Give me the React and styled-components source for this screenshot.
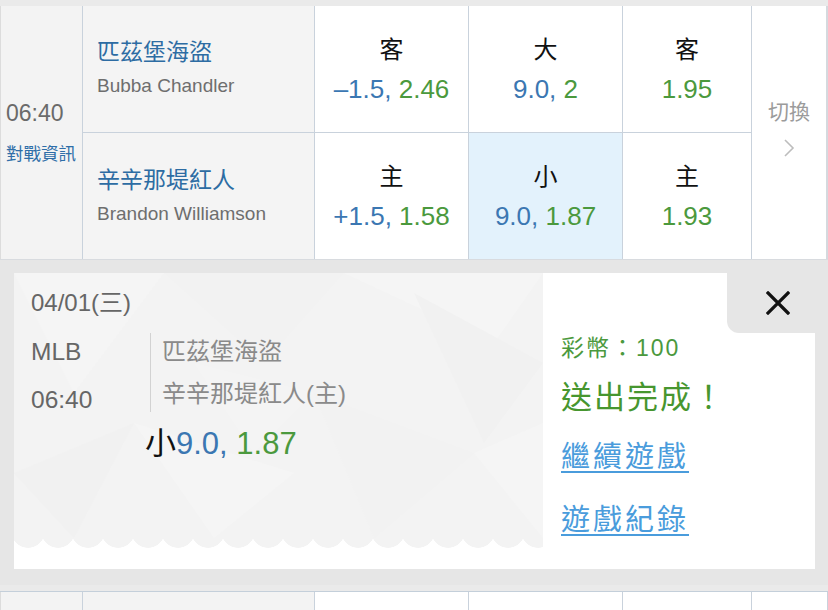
import React from "react";
import styled, { createGlobalStyle } from "styled-components";

const GlobalStyle = createGlobalStyle`
  html, body {
    margin: 0;
    padding: 0;
    background: #fff;
  }
  body {
    width: 828px;
    overflow: hidden;
    font-family: "Liberation Sans", "Noto Sans CJK TC", sans-serif;
  }
  * {
    box-sizing: border-box;
  }
`;

const COLS = "83px 232px 154px 154px 129px 76px";
const LINE = "#c9d2dc";
const BLUE = "#3b77b2";
const GREEN = "#4b993d";

const Strip = styled.div`
  height: 6px;
  background: #eaeaea;
`;

const MatchGrid = styled.div`
  display: grid;
  grid-template-columns: ${COLS};
  grid-template-rows: 127px 126px;
  border-bottom: 1px solid #d8dbdf;
`;

const TimeCell = styled.div`
  grid-column: 1;
  grid-row: 1 / span 2;
  display: flex;
  flex-direction: column;
  justify-content: center;
  gap: 14px;
  padding: 0 0 2px 5px;
  background: #f3f3f3;
  border-left: 1px solid #dcdcdc;
  border-right: 1px solid ${LINE};
`;

const TimeText = styled.div`
  font-size: 23px;
  line-height: 30px;
  color: #6a6a6a;
`;

const InfoLink = styled.div`
  font-size: 17.5px;
  line-height: 24px;
  color: #2f6ea8;
`;

const TeamCell = styled.div`
  grid-column: 2;
  padding: ${(p) => (p.$top ? "31px" : "32px")} 0 0 14px;
  background: #f4f4f4;
  border-right: 1px solid ${LINE};
  border-bottom: ${(p) => (p.$top ? `1px solid ${LINE}` : "none")};
`;

const TeamName = styled.div`
  font-size: 23px;
  line-height: 30px;
  color: #2d6ca3;
`;

const Pitcher = styled.div`
  margin-top: 7px;
  font-size: 19px;
  line-height: 24px;
  color: #6e6e6e;
  white-space: nowrap;
`;

const OddsCell = styled.div`
  padding-top: 28px;
  text-align: center;
  background: ${(p) => (p.$active ? "#e3f2fc" : "#fff")};
  border-right: 1px solid ${LINE};
  border-bottom: ${(p) => (p.$top ? `1px solid ${LINE}` : "none")};
`;

const OddsLabel = styled.div`
  font-size: 24px;
  line-height: 32px;
  color: #111;
`;

const OddsValue = styled.div`
  margin-top: 7px;
  font-size: 26px;
  line-height: 32px;
`;

const Num = styled.span`
  color: ${(p) => (p.$green ? GREEN : BLUE)};
`;

const SwitchCell = styled.div`
  grid-column: 6;
  grid-row: 1 / span 2;
  display: flex;
  flex-direction: column;
  align-items: center;
  justify-content: center;
  gap: 12px;
  padding-bottom: 10px;
  background: #fff;
  border-right: 2px solid #d5d9de;
  color: #9b9b9b;
  font-size: 21px;
  line-height: 28px;
`;

const Overlay = styled.div`
  padding: 13px 13px 16px 14px;
  background: #e6e6e6;
`;

const Card = styled.div`
  display: flex;
  height: 296px;
  background: #fff;
`;

const Ticket = styled.div`
  width: 529px;
  display: flex;
  flex-direction: column;
`;

const TicketBody = styled.div`
  position: relative;
  height: 265px;
  padding: 16px 0 0 17px;
  background: #f3f3f3;
  overflow: hidden;
`;

const Pattern = styled.svg`
  position: absolute;
  inset: 0;
  z-index: 0;
`;

const TicketContent = styled.div`
  position: relative;
  z-index: 1;
`;

const Zigzag = styled.div`
  height: 10px;
  background: radial-gradient(circle 17px at 15px -7px, #f3f3f3 16.5px, transparent 17px) -1px 0 / 30px 10px repeat-x;
`;

const DateText = styled.div`
  font-size: 24px;
  line-height: 28px;
  color: #666;
`;

const InfoRow = styled.div`
  display: flex;
  align-items: flex-start;
  margin-top: 16px;
`;

const MetaCol = styled.div`
  width: 119px;
  display: flex;
  flex-direction: column;
  gap: 20px;
  padding-top: 5px;
  font-size: 24.5px;
  line-height: 28px;
  color: #666;
`;

const TeamsCol = styled.div`
  display: flex;
  flex-direction: column;
  gap: 14px;
  padding: 5px 0 4px 11px;
  border-left: 1px solid #d2d2d2;
  font-size: 24px;
  line-height: 28px;
  color: #8a8a8a;
`;

const PickLine = styled.div`
  margin-top: 12px;
  padding-left: 114px;
  font-size: 31px;
  line-height: 36px;
  color: #111;
`;

const ResultPanel = styled.div`
  flex: 1;
  display: flex;
  flex-direction: column;
  padding-left: 18px;
`;

const CloseTab = styled.div`
  align-self: flex-end;
  width: 88px;
  height: 60px;
  display: flex;
  align-items: center;
  justify-content: center;
  padding-left: 14px;
  background: #e6e6e6;
  border-bottom-left-radius: 12px;
`;

const Coins = styled.div`
  font-size: 23px;
  line-height: 30px;
  letter-spacing: 2px;
  color: ${GREEN};
`;

const Done = styled.div`
  margin-top: 15px;
  font-size: 31px;
  line-height: 40px;
  letter-spacing: 2px;
  color: #47962f;
`;

const ActionLink = styled.a`
  display: block;
  align-self: flex-start;
  margin-top: ${(p) => p.$gap}px;
  font-size: 29px;
  line-height: 36px;
  letter-spacing: 3px;
  color: #4a9cdc;
  text-decoration: underline;
  text-underline-offset: 4px;
  text-decoration-thickness: 1.5px;
  cursor: pointer;
`;

const NextGrid = styled.div`
  display: grid;
  grid-template-columns: ${COLS};
  height: 30px;
  border-top: 1px solid #c4cfda;
`;

const NextCell = styled.div`
  background: ${(p) => (p.$gray ? "#f3f3f3" : "#fff")};
  border-right: 1px solid ${LINE};
  border-left: ${(p) => (p.$first ? "1px solid #dcdcdc" : "none")};
`;

const Chevron = () => (
  <svg width="12" height="20" viewBox="0 0 12 20">
    <path d="M2 2 L10 10 L2 18" fill="none" stroke="#bdbdbd" strokeWidth="1.6" />
  </svg>
);

const CloseIcon = () => (
  <svg width="24" height="24" viewBox="0 0 24 24">
    <path d="M2 2 L22 22 M22 2 L2 22" stroke="#111" strokeWidth="3.2" strokeLinecap="square" />
  </svg>
);

const LowPoly = () => (
  <Pattern width="529" height="265" viewBox="0 0 529 265">
    <polygon points="0,0 150,0 60,120" fill="#f5f5f5" />
    <polygon points="150,0 330,0 250,90" fill="#f2f2f2" />
    <polygon points="330,0 529,0 480,70" fill="#f5f5f5" />
    <polygon points="400,20 529,90 470,170" fill="#f1f1f1" />
    <polygon points="0,200 120,150 60,265" fill="#f1f1f1" />
    <polygon points="120,150 280,200 200,265" fill="#f5f5f5" />
    <polygon points="300,120 460,180 360,265" fill="#f2f2f2" />
    <polygon points="460,180 529,150 529,265" fill="#f5f5f5" />
    <polygon points="180,90 300,120 240,180" fill="#f4f4f4" />
  </Pattern>
);

const rows = [
  {
    team: "匹茲堡海盜",
    pitcher: "Bubba Chandler",
    cells: [
      { label: "客", line: "–1.5", odd: "2.46" },
      { label: "大", line: "9.0", odd: "2" },
      { label: "客", odd: "1.95" },
    ],
  },
  {
    team: "辛辛那堤紅人",
    pitcher: "Brandon Williamson",
    cells: [
      { label: "主", line: "+1.5", odd: "1.58" },
      { label: "小", line: "9.0", odd: "1.87", active: true },
      { label: "主", odd: "1.93" },
    ],
  },
];

export default function App() {
  return (
    <>
      <GlobalStyle />
      <Strip />
      <MatchGrid>
        <TimeCell>
          <TimeText>06:40</TimeText>
          <InfoLink>對戰資訊</InfoLink>
        </TimeCell>
        {rows.map((row, i) => (
          <React.Fragment key={row.team}>
            <TeamCell $top={i === 0}>
              <TeamName>{row.team}</TeamName>
              <Pitcher>{row.pitcher}</Pitcher>
            </TeamCell>
            {row.cells.map((c, j) => (
              <OddsCell key={j} $top={i === 0} $active={c.active}>
                <OddsLabel>{c.label}</OddsLabel>
                <OddsValue>
                  {c.line && <Num>{c.line}, </Num>}
                  <Num $green>{c.odd}</Num>
                </OddsValue>
              </OddsCell>
            ))}
          </React.Fragment>
        ))}
        <SwitchCell>
          <span>切換</span>
          <Chevron />
        </SwitchCell>
      </MatchGrid>

      <Overlay>
        <Card>
          <Ticket>
            <TicketBody>
              <LowPoly />
              <TicketContent>
                <DateText>04/01(三)</DateText>
                <InfoRow>
                  <MetaCol>
                    <span>MLB</span>
                    <span>06:40</span>
                  </MetaCol>
                  <TeamsCol>
                    <span>匹茲堡海盜</span>
                    <span>辛辛那堤紅人(主)</span>
                  </TeamsCol>
                </InfoRow>
                <PickLine>
                  小<Num>9.0, </Num>
                  <Num $green>1.87</Num>
                </PickLine>
              </TicketContent>
            </TicketBody>
            <Zigzag />
          </Ticket>
          <ResultPanel>
            <CloseTab>
              <CloseIcon />
            </CloseTab>
            <Coins>彩幣：100</Coins>
            <Done>送出完成！</Done>
            <ActionLink $gap={21}>繼續遊戲</ActionLink>
            <ActionLink $gap={27}>遊戲紀錄</ActionLink>
          </ResultPanel>
        </Card>
      </Overlay>

      <Strip />
      <NextGrid>
        <NextCell $gray $first />
        <NextCell $gray />
        <NextCell />
        <NextCell />
        <NextCell />
        <NextCell />
      </NextGrid>
    </>
  );
}
